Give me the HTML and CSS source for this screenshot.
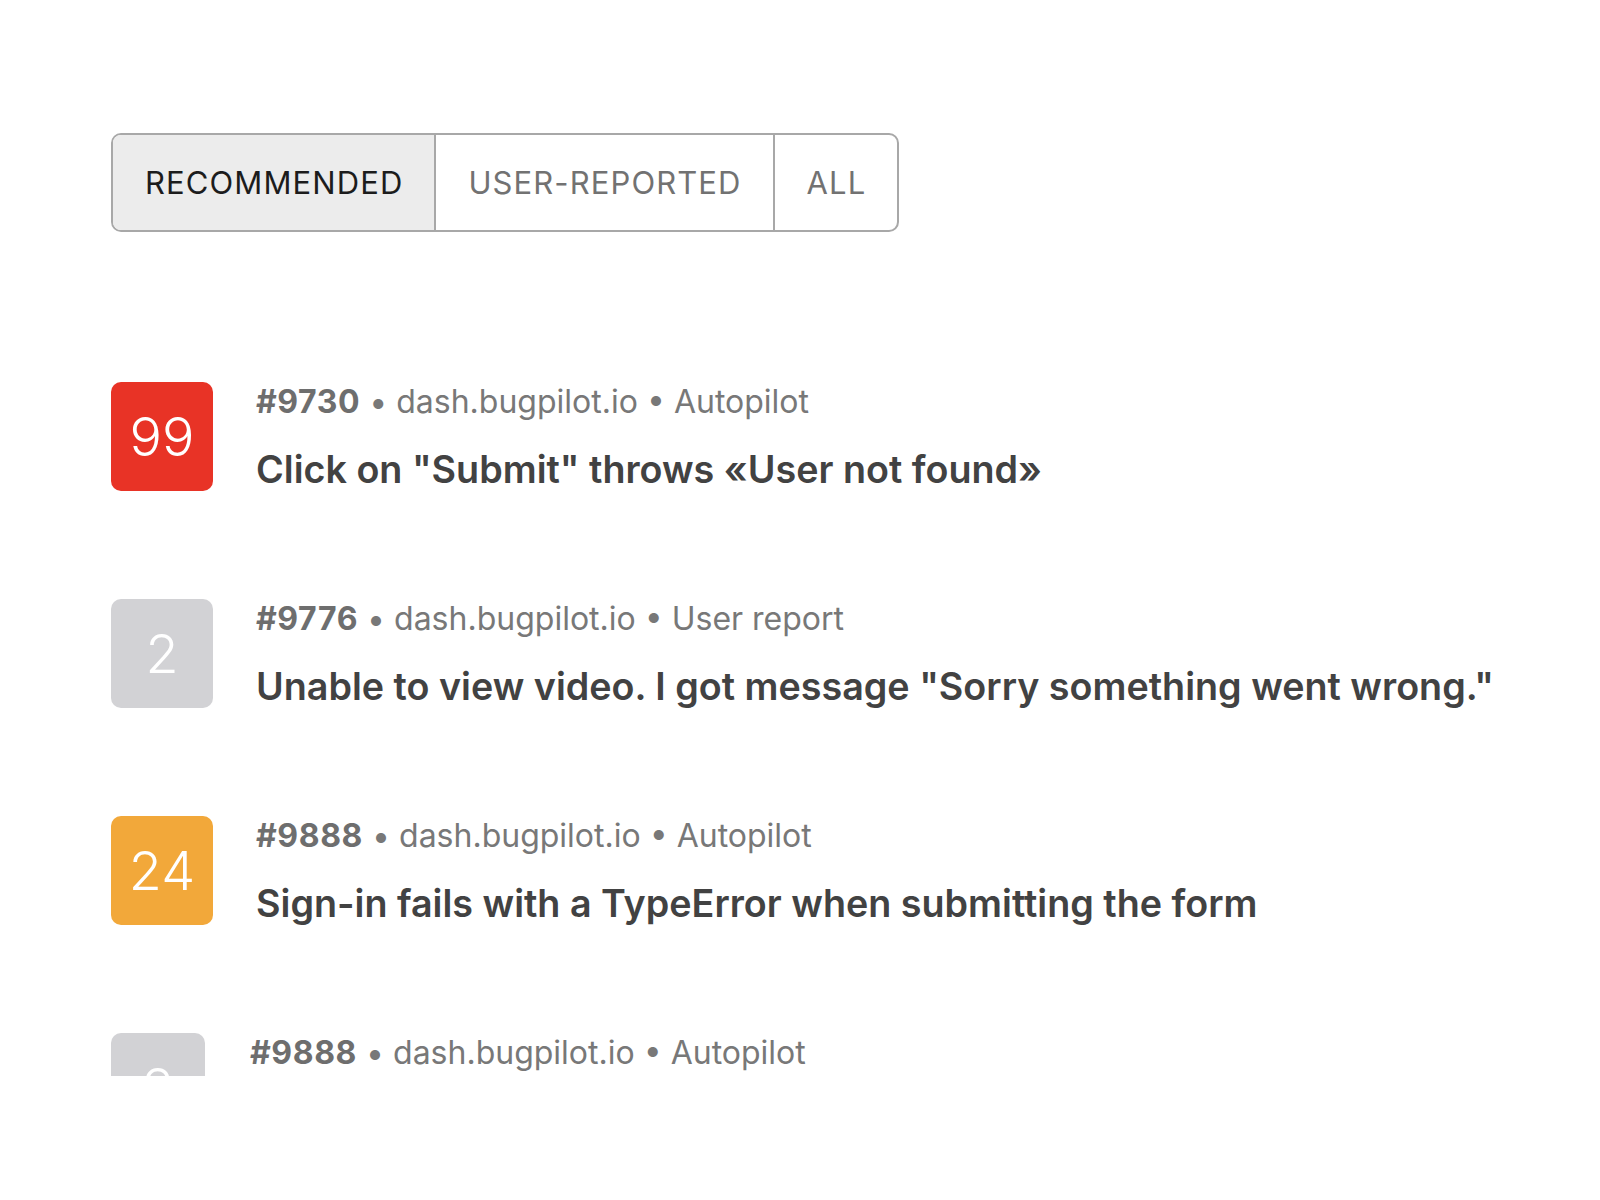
FILE: index.html
```html
<!DOCTYPE html>
<html>
<head>
<meta charset="utf-8">
<link rel="stylesheet" href="styles.css">
</head>
<body>
<div class="page">
  <div class="tabs">
    <div class="tab active">RECOMMENDED</div>
    <div class="tab">USER-REPORTED</div>
    <div class="tab">ALL</div>
  </div>
  <div class="list">
    <div class="item">
      <div class="badge red">99</div>
      <div class="info">
        <div class="meta"><b>#9730</b> • dash.bugpilot.io • Autopilot</div>
        <div class="title">Click on "Submit" throws «User not found»</div>
      </div>
    </div>
    <div class="item">
      <div class="badge grey">2</div>
      <div class="info">
        <div class="meta"><b>#9776</b> • dash.bugpilot.io • User report</div>
        <div class="title">Unable to view video. I got message "Sorry something went wrong."</div>
      </div>
    </div>
    <div class="item">
      <div class="badge orange">24</div>
      <div class="info">
        <div class="meta"><b>#9888</b> • dash.bugpilot.io • Autopilot</div>
        <div class="title">Sign-in fails with a TypeError when submitting the form</div>
      </div>
    </div>
    <div class="item last">
      <div class="badge grey">2</div>
      <div class="info">
        <div class="meta"><b>#9888</b> • dash.bugpilot.io • Autopilot</div>
        <div class="title">Sign-in fails with a TypeError when submitting the form</div>
      </div>
    </div>
  </div>
</div>
</body>
</html>
```

FILE: styles.css
```css
html, body {
  margin: 0;
  padding: 0;
  background: #ffffff;
}
body {
  font-family: Inter, "Noto Sans", sans-serif;
}
.page {
  padding: 133px 0 0 111px;
}
.tabs {
  display: inline-flex;
  border: 2px solid #a8a8a8;
  border-radius: 10px;
  overflow: hidden;
  height: 95px;
}
.tab {
  display: flex;
  align-items: center;
  padding: 0 31px 0 32px;
  font-size: 31px;
  letter-spacing: 1.1px;
  color: #727272;
  border-left: 2px solid #a8a8a8;
}
.tab:first-child {
  border-left: none;
}
.tab.active {
  background: #ececec;
  color: #1c1c1c;
}
.list {
  margin-top: 150px;
  height: 694px;
  overflow: hidden;
  display: flex;
  flex-direction: column;
  gap: 108px;
}
.item {
  display: flex;
  gap: 43px;
  flex-shrink: 0;
}
.badge {
  width: 102px;
  height: 109px;
  border-radius: 10px;
  display: flex;
  align-items: center;
  justify-content: center;
  color: #ffffff;
  font-size: 54px;
  font-weight: 300;
  flex-shrink: 0;
}
.red { background: #e83326; }
.grey { background: #d2d2d5; }
.orange { background: #f2a83a; }
.info {
  display: flex;
  flex-direction: column;
  padding-top: 1px;
}
.meta {
  font-size: 32px;
  color: #787878;
  line-height: 38px;
  white-space: nowrap;
}
.meta b {
  font-weight: 700;
  color: #6e6e6e;
  letter-spacing: 0.6px;
}
.title {
  margin-top: 26px;
  font-size: 37.7px;
  font-weight: 600;
  color: #424242;
  line-height: 44px;
  white-space: nowrap;
}
.item.last .badge {
  width: 94px;
}
.item.last {
  gap: 45px;
}
```
